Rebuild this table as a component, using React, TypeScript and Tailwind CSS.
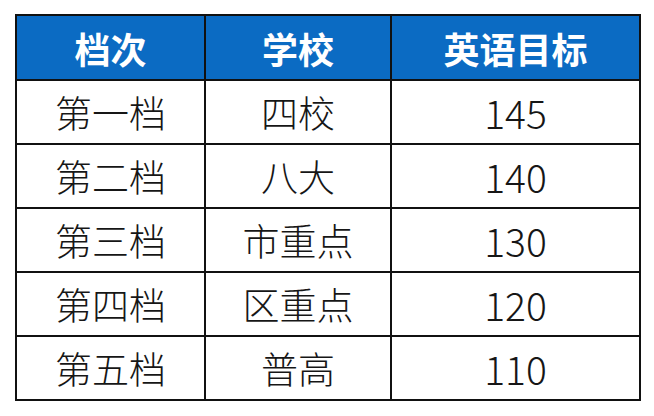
const rows = [
  { tier: "第一档", school: "四校", score: "145" },
  { tier: "第二档", school: "八大", score: "140" },
  { tier: "第三档", school: "市重点", score: "130" },
  { tier: "第四档", school: "区重点", score: "120" },
  { tier: "第五档", school: "普高", score: "110" },
]

const font = { fontFamily: '"Noto Sans CJK SC", "Noto Sans", sans-serif' }

export default function App() {
  return (
    <div className="w-[654px] h-[416px] bg-white pt-[14px] pl-[15px]" style={font}>
      <table className="border-collapse w-[624px] table-fixed">
        <colgroup>
          <col className="w-[189px]" />
          <col className="w-[186px]" />
          <col className="w-[249px]" />
        </colgroup>
        <thead>
          <tr className="h-[65px] bg-[#0b6bc3] text-white">
            <th className="border-2 border-[#111] text-[36px] font-bold leading-none">档次</th>
            <th className="border-2 border-[#111] text-[36px] font-bold leading-none">学校</th>
            <th className="border-2 border-[#111] text-[36px] font-bold leading-none">英语目标</th>
          </tr>
        </thead>
        <tbody>
          {rows.map((r) => (
            <tr key={r.tier} className="h-[64px] text-[#161616]">
              <td className="border-2 border-[#111] text-center text-[37px] font-light leading-none">{r.tier}</td>
              <td className="border-2 border-[#111] text-center text-[37px] font-light leading-none">{r.school}</td>
              <td className="border-2 border-[#111] text-center text-[39px] font-light leading-none">{r.score}</td>
            </tr>
          ))}
        </tbody>
      </table>
    </div>
  )
}
